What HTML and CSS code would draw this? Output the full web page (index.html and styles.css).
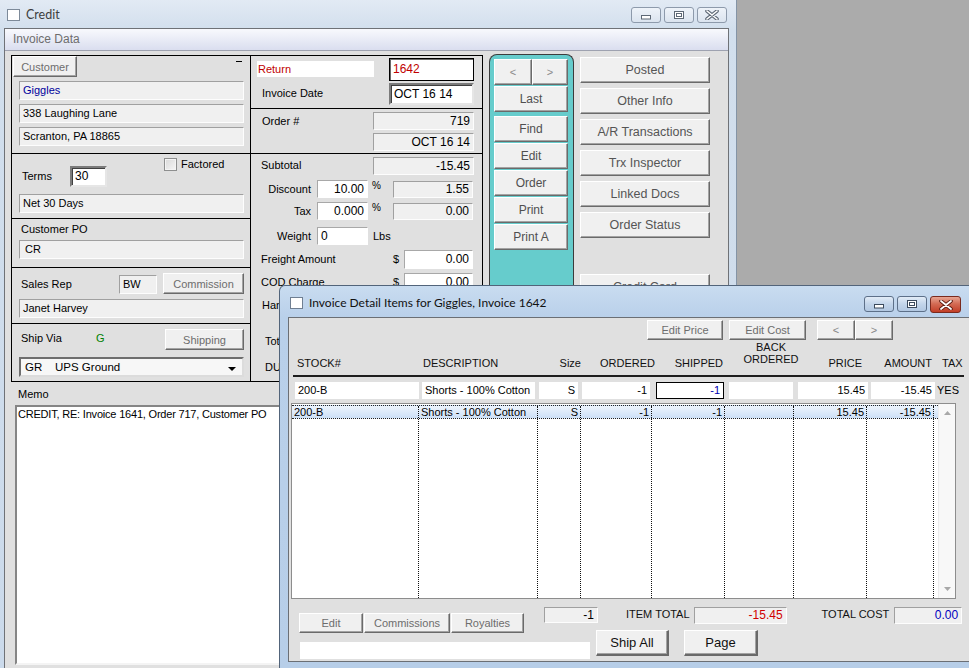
FILE: index.html
```html
<!DOCTYPE html>
<html>
<head>
<meta charset="utf-8">
<title>Credit</title>
<link rel="stylesheet" href="styles.css">
</head>
<body>
<div class="win win-main">
  <div class="tbar">
    <span class="ticon"></span>
    <span class="ttext">Credit</span>
    <div class="tbtns">
      <span class="tb tb-in"><svg width="10" height="5" viewBox="0 0 10 5"><rect x="0.5" y="0.5" width="9" height="3.5" fill="#fff" stroke="#5d6875"/></svg></span>
      <span class="tb tb-in"><svg width="10" height="8" viewBox="0 0 10 8"><rect x="0.5" y="0.5" width="9" height="7" fill="#fff" stroke="#5d6875"/><rect x="2.5" y="2.5" width="5" height="3" fill="none" stroke="#5d6875"/></svg></span>
      <span class="tb tb-in"><svg width="14" height="10" viewBox="0 0 14 10"><path d="M2 1 L12 9 M12 1 L2 9" stroke="#5d6875" stroke-width="3.6" stroke-linecap="round"/><path d="M2 1 L12 9 M12 1 L2 9" stroke="#fff" stroke-width="1.6" stroke-linecap="round"/></svg></span>
    </div>
  </div>
  <div class="main-client">
    <div class="phead">Invoice Data</div>
    <div class="form">
      <div class="toprow">
        <div class="lbox">
          <div class="sec s1">
            <div class="row">
              <span class="btn b-cust">Customer</span>
              <span class="dash"></span>
            </div>
            <div class="fld f225 h19 blue">Giggles</div>
            <div class="fld f225 h19">338 Laughing Lane</div>
            <div class="fld f225 h19">Scranton, PA 18865</div>
          </div>
          <div class="sec s2">
            <div class="row">
              <span class="lbl l-terms">Terms</span>
              <span class="inp i-terms">30</span>
              <span class="chk-wrap"><span class="chk"></span><span class="chk-lbl">Factored</span></span>
            </div>
            <div class="fld f225 h19 mt7">Net 30 Days</div>
          </div>
          <div class="sec s3">
            <div class="lbl l-po">Customer PO</div>
            <div class="fld f225 h19 pad5">CR</div>
          </div>
          <div class="sec s4">
            <div class="row">
              <span class="lbl l-rep">Sales Rep</span>
              <span class="fld h19 f-bw">BW</span>
              <span class="btn b-comm">Commission</span>
            </div>
            <div class="fld f225 h19 mt5">Janet Harvey</div>
          </div>
          <div class="sec s5">
            <div class="row">
              <span class="lbl l-ship">Ship Via</span>
              <span class="lbl l-g">G</span>
              <span class="btn b-ship">Shipping</span>
            </div>
            <div class="combo"><span>GR&nbsp;&nbsp;&nbsp;&nbsp;UPS Ground</span><svg width="8" height="4" viewBox="0 0 8 4"><path d="M0 0 H8 L4 4 Z" fill="#000"/></svg></div>
          </div>
        </div>

        <div class="mbox">
          <div class="msec m1">
            <div class="row">
              <span class="f-return">Return</span>
              <span class="i-num">1642</span>
            </div>
            <div class="row mt2">
              <span class="lbl l-idate">Invoice Date</span>
              <span class="inp i-date">OCT 16 14</span>
            </div>
          </div>
          <div class="msec m2">
            <div class="row">
              <span class="lbl l-order">Order #</span>
              <div class="ocol">
                <span class="fld h18 r f101">719</span>
                <span class="fld h18 r f101">OCT 16 14</span>
              </div>
            </div>
          </div>
          <div class="msec m3">
            <div class="row">
              <span class="lbl l-sub">Subtotal</span>
              <span class="fld h18 r f101 mt3">-15.45</span>
            </div>
            <div class="row mt5">
              <span class="lbl l-right">Discount</span>
              <span class="inp1 r i-pct">10.00</span>
              <span class="pct">%</span>
              <span class="fld h17 r f80 mt1">1.55</span>
            </div>
            <div class="row mt4">
              <span class="lbl l-right">Tax</span>
              <span class="inp1 r i-pct">0.000</span>
              <span class="pct">%</span>
              <span class="fld h17 r f80 mt1">0.00</span>
            </div>
            <div class="row mt7">
              <span class="lbl l-right">Weight</span>
              <span class="inp1 i-pct">0</span>
              <span class="lbs">Lbs</span>
            </div>
            <div class="row mt5">
              <span class="lbl l-money">Freight Amount</span>
              <span class="dollar">$</span>
              <span class="inp1 r i-money">0.00</span>
            </div>
            <div class="row mt4">
              <span class="lbl l-money">COD Charge</span>
              <span class="dollar">$</span>
              <span class="inp1 r i-money">0.00</span>
            </div>
            <div class="lbl l-extra">Handling</div>
            <div class="lbl l-tot">Total</div>
            <div class="lbl l-due">DUE</div>
          </div>
        </div>

        <div class="teal">
          <div class="row">
            <span class="btn tbtn t-prev">&lt;</span>
            <span class="btn tbtn t-next">&gt;</span>
          </div>
          <span class="btn tbtn t-full mt1">Last</span>
          <span class="btn tbtn t-full mt4">Find</span>
          <span class="btn tbtn t-full mt1">Edit</span>
          <span class="btn tbtn t-full mt1">Order</span>
          <span class="btn tbtn t-full mt1">Print</span>
          <span class="btn tbtn t-full mt1">Print A</span>
        </div>

        <div class="rbtns">
          <span class="btn rbtn">Posted</span>
          <span class="btn rbtn">Other Info</span>
          <span class="btn rbtn">A/R Transactions</span>
          <span class="btn rbtn">Trx Inspector</span>
          <span class="btn rbtn">Linked Docs</span>
          <span class="btn rbtn">Order Status</span>
          <span class="btn rbtn r-cc">Credit Card</span>
        </div>
      </div>
      <div class="lbl memo-lbl">Memo</div>
      <div class="memo">CREDIT, RE: Invoice 1641, Order 717, Customer PO</div>
    </div>
  </div>
</div>

<div class="win win-detail">
  <div class="tbar dtbar">
    <span class="ticon d-icon"></span>
    <span class="ttext">Invoice Detail Items for Giggles, Invoice 1642</span>
    <div class="tbtns d-btns">
      <span class="tb tb-act"><svg width="10" height="5" viewBox="0 0 10 5"><rect x="0.5" y="0.5" width="9" height="3.5" fill="#fff" stroke="#3b4a5c"/></svg></span>
      <span class="tb tb-act"><svg width="10" height="8" viewBox="0 0 10 8"><rect x="0.5" y="0.5" width="9" height="7" fill="#fff" stroke="#3b4a5c"/><rect x="2.5" y="2.5" width="5" height="3" fill="none" stroke="#3b4a5c"/></svg></span>
      <span class="tb tb-close"><svg width="14" height="10" viewBox="0 0 14 10"><path d="M2 1 L12 9 M12 1 L2 9" stroke="#5a1a10" stroke-width="3.6" stroke-linecap="round"/><path d="M2 1 L12 9 M12 1 L2 9" stroke="#fff" stroke-width="1.8" stroke-linecap="round"/></svg></span>
    </div>
  </div>
  <div class="dclient">
    <div class="dtool">
      <span class="btn d-ep">Edit Price</span>
      <span class="btn d-ec">Edit Cost</span>
      <span class="btn d-arr d-lt">&lt;</span>
      <span class="btn d-arr">&gt;</span>
    </div>
    <div class="dhead">
      <span class="h-stock">STOCK#</span>
      <span class="h-desc">DESCRIPTION</span>
      <span class="h-size">Size</span>
      <span class="h-ord">ORDERED</span>
      <span class="h-ship">SHIPPED</span>
      <span class="h-back">BACK<br>ORDERED</span>
      <span class="h-price">PRICE</span>
      <span class="h-amt">AMOUNT</span>
      <span class="h-tax">TAX</span>
    </div>
    <div class="entry">
      <span class="ef e-stock">200-B</span>
      <span class="ef e-desc">Shorts - 100% Cotton</span>
      <span class="ef r e-size">S</span>
      <span class="ef r e-ord">-1</span>
      <span class="ef r e-ship">-1</span>
      <span class="ef e-back"></span>
      <span class="ef r e-price">15.45</span>
      <span class="ef r e-amt">-15.45</span>
      <span class="e-tax">YES</span>
    </div>
    <div class="grid">
      <div class="gbody">
        <div class="grow sel">
          <span class="gc c1">200-B</span>
          <span class="gc c2">Shorts - 100% Cotton</span>
          <span class="gc c3 r">S</span>
          <span class="gc c4 r">-1</span>
          <span class="gc c5 r">-1</span>
          <span class="gc c6"></span>
          <span class="gc c7 r">15.45</span>
          <span class="gc c8 r">-15.45</span>
          <span class="gc c9"></span>
        </div>
        <div class="grow fill">
          <span class="gc c1"></span>
          <span class="gc c2"></span>
          <span class="gc c3"></span>
          <span class="gc c4"></span>
          <span class="gc c5"></span>
          <span class="gc c6"></span>
          <span class="gc c7"></span>
          <span class="gc c8"></span>
          <span class="gc c9"></span>
        </div>
      </div>
      <div class="sbar">
        <svg width="7" height="4" viewBox="0 0 7 4"><path d="M0 4 L3.5 0 L7 4 Z" fill="#a8a8a8"/></svg>
        <svg width="7" height="4" viewBox="0 0 7 4"><path d="M0 0 L3.5 4 L7 0 Z" fill="#a8a8a8"/></svg>
      </div>
    </div>
    <div class="dfoot">
      <div class="fcol-l">
        <div class="row">
          <div class="fbtns">
            <span class="btn fb-edit">Edit</span>
            <span class="btn fb-comm">Commissions</span>
            <span class="btn fb-roy">Royalties</span>
          </div>
          <span class="fld r f-cnt">-1</span>
        </div>
        <div class="f-white"></div>
      </div>
      <div class="fcol-r">
        <div class="row">
          <span class="tot-lbl it-lbl">ITEM TOTAL</span>
          <span class="fld r f-it red">-15.45</span>
          <span class="tot-lbl tc-lbl">TOTAL COST</span>
          <span class="fld r f-tc navy">0.00</span>
        </div>
        <div class="row mt6">
          <span class="btn bigbtn b-shipall">Ship All</span>
          <span class="btn bigbtn b-page">Page</span>
        </div>
      </div>
    </div>
  </div>
</div>
</body>
</html>
```

FILE: styles.css
```css
* { box-sizing: border-box; }
html, body { margin: 0; padding: 0; }
body {
  width: 969px;
  height: 668px;
  overflow: hidden;
  position: relative;
  background: #ababab;
  font-family: "Liberation Sans", Arial, sans-serif;
  font-size: 11px;
  color: #000;
}
.row { display: flex; align-items: flex-start; }
.row > * { flex: none; }
.r { text-align: right; }
.mt1 { margin-top: 1px; }
.mt2 { margin-top: 2px; }
.mt3 { margin-top: 3px; }
.mt4 { margin-top: 4px; }
.mt5 { margin-top: 5px !important; }
.mt6 { margin-top: 6px; }
.mt7 { margin-top: 7px !important; }
.blue { color: #00009c; }
.red { color: #d00000; }
.navy { color: #0000c0; }

/* ---------- windows ---------- */
.win { position: absolute; }
.win-main {
  left: 0; top: 0;
  width: 737px; height: 668px;
  padding: 0 7px 0 4px;
  background: linear-gradient(#e2eaf4, #d2dfed 30px, #cbdaeb);
  border-right: 1px solid #8494a6;
}
.tbar { display: flex; align-items: flex-start; height: 28px; }
.ticon {
  width: 13px; height: 12px;
  margin: 9px 0 0 3px;
  background: #fff;
  border: 1px solid #7d8a99;
  flex: none;
}
.ttext {
  font-family: Lato, "Noto Sans", sans-serif;
  font-size: 12.5px;
  line-height: 16px;
  margin: 7px 0 0 6px;
  color: #3e3e3e;
  white-space: nowrap;
}
.tbtns { margin-left: auto; margin-right: 2px; margin-top: 7px; display: flex; gap: 3px; }
.tb {
  width: 30px; height: 16px;
  border-radius: 3px;
  display: flex; align-items: center; justify-content: center;
}
.tb-in {
  border: 1px solid #8d9aab;
  background: linear-gradient(#eef3f9, #dbe4ef);
}
.tb-in:first-child svg { margin-top: 5px; }
.main-client {
  height: 640px;
  border: 1px solid #6f7277;
  border-bottom: none;
  background: #e0e0e0;
}
.phead {
  height: 22px;
  padding-left: 8px;
  line-height: 21px;
  font-size: 12px;
  color: #6d6d6d;
  border-bottom: 1px solid #9ea2b0;
  background: linear-gradient(#f8f9fd, #dadeef);
}
.form { padding: 4px 0 0 6px; }
.toprow { display: flex; align-items: flex-start; height: 327px; }

/* ---------- generic controls ---------- */
.lbl { line-height: 14px; white-space: nowrap; }
.fld {
  display: block;
  background: #f0f0f0;
  border: 1px solid;
  border-color: #a0a0a0 #fdfdfd #fdfdfd #a0a0a0;
  padding: 0 3px;
  white-space: nowrap;
  overflow: hidden;
}
.h19 { height: 19px; line-height: 17px; }
.h18 { height: 18px; line-height: 16px; }
.h17 { height: 17px; line-height: 15px; }
.inp {
  display: block;
  background: #fff;
  border: 2px solid;
  border-color: #7b7b7b #e6e6e6 #e6e6e6 #7b7b7b;
  box-shadow: inset 1px 1px 0 #404040;
  padding: 0 3px;
  white-space: nowrap;
}
.inp1 {
  display: block;
  background: #fff;
  border: 1px solid;
  border-color: #a8a8a8 #fff #fff #a8a8a8;
  padding: 0 3px;
  height: 18px;
  line-height: 16px;
}
.btn {
  display: flex; align-items: center; justify-content: center;
  background: #f0f0f0;
  border: 1px solid;
  border-color: #fff #6a6a6a #6a6a6a #fff;
  box-shadow: inset -1px -1px 0 #a3a3a3;
  color: #6d6d6d;
  font-size: 11px;
  white-space: nowrap;
}

/* ---------- left box ---------- */
.lbox { width: 240px; height: 327px; border: 1px solid #000; flex: none; }
.sec { border-bottom: 1px solid #000; }
.s1 { height: 98px; }
.s2 { height: 65px; }
.s3 { height: 46px; }
.s4 { height: 56px; }
.s5 { height: 59px; border-bottom: none; }
.f225 { width: 225px; margin-left: 7px; margin-top: 4px; }
.b-cust { width: 64px; height: 21px; margin-left: 1px; }
.dash { width: 6px; height: 1px; background: #000; margin: 5px 8px 0 auto; }
.l-terms { width: 48px; margin: 15px 0 0 10px; }
.i-terms { width: 37px; height: 21px; line-height: 17px; margin-top: 12px; font-size: 12px; }
.chk-wrap { display: flex; align-items: center; margin: 4px 0 0 57px; }
.chk {
  width: 13px; height: 13px;
  border: 1px solid #8e8f8f;
  background: linear-gradient(135deg, #d9d9d9, #f6f6f6);
  box-shadow: inset 0 0 0 1px #f4f4f4;
}
.chk-lbl { margin-left: 4px; line-height: 13px; font-size: 11px; }
.l-po { margin: 3px 0 0 9px; }
.pad5 { padding-left: 5px; }
.l-rep { width: 98px; margin: 9px 0 0 9px; }
.f-bw { width: 38px; margin-top: 7px; }
.b-comm { width: 81px; height: 21px; margin: 5px 0 0 6px; }
.l-ship { width: 75px; margin: 7px 0 0 9px; }
.l-g { width: 69px; margin-top: 7px; color: #008000; }
.b-ship { width: 79px; height: 21px; margin-top: 5px; }
.combo {
  width: 225px; height: 20px;
  margin: 7px 0 0 7px;
  display: flex; align-items: center; justify-content: space-between;
  padding: 0 6px 0 4px;
  background: #f7f7f7;
  border: 2px solid;
  border-color: #6e6e6e #dcdcdc #dcdcdc #6e6e6e;
  font-size: 11.5px;
}
.combo svg { margin-top: 3px; }

/* ---------- middle box ---------- */
.mbox { width: 233px; height: 327px; border: 1px solid #000; margin-left: -1px; flex: none; }
.msec { border-bottom: 1px solid #000; }
.m1 { height: 53px; }
.m2 { height: 45px; }
.m3 { border-bottom: none; }
.f-return {
  width: 117px; height: 16px;
  margin: 5px 0 0 6px;
  background: #fff;
  color: #c00000;
  line-height: 16px;
  padding-left: 1px;
}
.i-num {
  width: 85px; height: 23px;
  margin: 2px 0 0 15px;
  background: #fff;
  border: 1px solid #000;
  box-shadow: inset 1px 1px 0 #6a6a6a;
  color: #c00000;
  font-size: 12px;
  line-height: 21px;
  padding-left: 3px;
}
.l-idate { width: 127px; margin: 3px 0 0 11px; }
.i-date { width: 85px; height: 22px; line-height: 18px; font-size: 12px; }
.l-order { width: 111px; margin: 5px 0 0 11px; }
.ocol { display: flex; flex-direction: column; gap: 3px; margin-top: 3px; }
.f101 { width: 101px; font-size: 12px; }
.f80 { width: 80px; font-size: 12px; }
.l-sub { width: 112px; margin: 4px 0 0 10px; }
.l-right { width: 61px; text-align: right; padding-right: 1px; line-height: 18px; }
.i-pct { width: 51px; margin-left: 5px; font-size: 12px; }
.pct { width: 25px; padding-left: 4px; line-height: 12px; font-size: 10px; }
.lbs { margin-left: 5px; line-height: 18px; }
.l-money { width: 132px; margin-left: 10px; line-height: 19px; }
.dollar { width: 11px; line-height: 19px; }
.i-money { width: 69px; height: 19px; line-height: 17px; font-size: 12px; }
.l-extra { margin: 6px 0 0 11px; }
.l-tot { margin: 22px 0 0 14px; }
.l-due { margin: 12px 0 0 14px; }

/* ---------- teal nav ---------- */
.teal {
  width: 85px; height: 320px;
  margin: -1px 0 0 6px;
  padding: 4px 0 0 4px;
  background: #66cccc;
  border: 1px solid #3c3c3c;
  border-bottom: none;
  border-radius: 8px 8px 0 0;
  flex: none;
}
.tbtn { height: 26px; font-size: 12px; color: #4f4f4f; }
.t-prev { width: 38px; color: #8a8a8a; font-size: 11px; }
.t-next { width: 36px; color: #8a8a8a; font-size: 11px; }
.t-full { width: 74px; }

/* ---------- right buttons ---------- */
.rbtns { width: 130px; margin: 2px 0 0 6px; display: flex; flex-direction: column; gap: 5px; flex: none; }
.rbtn { height: 26px; font-size: 12.5px; color: #555; }
.r-cc { margin-top: 31px; }

/* ---------- memo ---------- */
.memo-lbl { margin: 5px 0 0 7px; }
.memo {
  width: 713px; height: 260px;
  margin: 4px 0 0 4px;
  background: #fff;
  border: 2px solid;
  border-color: #858585 #f4f4f4 #f4f4f4 #858585;
  line-height: 14px;
  padding: 0 1px;
  letter-spacing: -0.2px;
}

/* ---------- detail window ---------- */
.win-detail {
  left: 279px; top: 285px;
  width: 700px; height: 383px;
  padding: 0 0 6px 8px;
  border: 1px solid #52647a;
  border-bottom: none;
  border-radius: 6px 6px 0 0;
  background: linear-gradient(#c9dcf0, #b9d0ea 31px, #b7cee8);
}
.dtbar { height: 31px; }
.d-icon { margin: 11px 0 0 2px; border-color: #6f7f92; }
.dtbar .ttext { margin-top: 9px; color: #111; font-size: 12px; }
.d-btns { margin-right: 17px; margin-top: 10px; }
.tb-act {
  height: 16px;
  border: 1px solid #5d7089;
  background: linear-gradient(#e2ecf7, #c3d5ea 50%, #b2c8e2);
}
.tb-act:first-child svg { margin-top: 5px; }
.tb-close {
  width: 31px; height: 17px;
  border: 1px solid #7a2a1e;
  background: linear-gradient(#e8a593, #d36c55 45%, #c23e27);
}
.dclient {
  height: 345px;
  border: 1px solid #6b6f75;
  background: #e0e0e0;
}
.dtool { display: flex; margin-top: 2px; }
.dtool .btn { height: 20px; }
.d-ep { width: 76px; margin-left: 358px; }
.d-ec { width: 77px; margin-left: 6px; }
.d-arr { width: 38px; color: #888; }
.d-lt { margin-left: 11px; }
.dhead {
  display: flex; align-items: flex-end;
  width: 671px; height: 37px;
  margin-left: 4px;
  padding-bottom: 5px;
  border-bottom: 2px solid #1e1e1e;
  font-size: 11px;
  line-height: 14px;
  color: #111;
  white-space: nowrap;
}
.dhead > * { flex: none; }
.h-stock { width: 130px; padding-left: 4px; }
.h-desc { width: 118px; }
.h-size { width: 40px; text-align: right; }
.h-ord { width: 74px; text-align: right; }
.h-ship { width: 68px; text-align: right; }
.h-back { width: 96px; text-align: center; align-self: flex-start; line-height: 12px; margin-top: 1px; }
.h-price { width: 43px; text-align: right; }
.h-amt { width: 70px; text-align: right; }
.h-tax { margin-left: 10px; }
.entry { display: flex; margin-top: 5px; height: 17px; }
.entry > * { flex: none; }
.ef {
  display: block; height: 17px;
  background: #fff;
  line-height: 17px;
  padding: 0 3px;
  white-space: nowrap;
  overflow: hidden;
  font-size: 11px;
}
.e-stock { width: 124px; margin-left: 6px; }
.e-desc { width: 113px; margin-left: 3px; }
.e-size { width: 39px; margin-left: 4px; }
.e-ord { width: 68px; margin-left: 4px; }
.e-ship { width: 68px; margin-left: 6px; border: 1px solid #000; line-height: 15px; color: #0000b0; }
.e-back { width: 64px; margin-left: 5px; }
.e-price { width: 70px; margin-left: 5px; }
.e-amt { width: 64px; margin-left: 3px; }
.e-tax { margin-left: 2px; line-height: 17px; font-size: 11px; }
.grid {
  display: flex;
  width: 665px; height: 196px;
  margin: 4px 0 0 2px;
  background: #fff;
  border: 1px solid #8d8d8d;
}
.gbody { flex: 1; display: flex; flex-direction: column; padding-top: 1px; }
.grow { display: flex; }
.grow.sel {
  height: 14px;
  border-top: 1px dotted #222;
  border-bottom: 1px dotted #222;
  background: linear-gradient(#edf4fd, #cde0f7);
}
.grow.fill { flex: 1; }
.gc {
  display: block;
  border-right: 1px dotted #111;
  line-height: 12px;
  padding: 0 2px;
  white-space: nowrap;
  overflow: hidden;
  font-size: 11px;
  flex: none;
}
.c1 { width: 127px; }
.c2 { width: 119px; }
.c3 { width: 43px; }
.c4 { width: 71px; }
.c5 { width: 73px; }
.c6 { width: 69px; }
.c7 { width: 73px; }
.c8 { width: 67px; }
.c9 { flex: 1; border-right: none; }
.sbar {
  width: 17px;
  background: #f8f8f8;
  border-left: 1px solid #ececec;
  display: flex; flex-direction: column; justify-content: space-between; align-items: center;
  padding: 7px 0 7px;
}
.dfoot { display: flex; }
.fcol-l { width: 309px; padding-top: 8px; flex: none; }
.fbtns { display: flex; gap: 1px; margin: 6px 0 0 10px; }
.fbtns .btn { height: 20px; }
.fb-edit { width: 64px; }
.fb-comm { width: 86px; }
.fb-roy { width: 73px; }
.f-cnt { width: 54px; height: 16px; line-height: 14px; margin-left: 20px; font-size: 12px; }
.f-white { width: 290px; height: 17px; margin: 9px 0 0 11px; background: #fff; }
.fcol-r { padding-top: 8px; flex: none; width: 365px; }
.tot-lbl { line-height: 15px; font-size: 11px; color: #111; white-space: nowrap; }
.it-lbl { margin-left: 28px; }
.f-it { width: 93px; height: 17px; line-height: 15px; margin-left: 4px; font-size: 12px; }
.tc-lbl { margin-left: 35px; }
.f-tc { width: 68px; height: 17px; line-height: 15px; margin-left: 5px; font-size: 12px; }
.bigbtn { height: 26px; font-size: 13px; color: #111; border-right-width: 2px; border-bottom-width: 2px; }
.b-shipall { width: 73px; margin-left: -2px; }
.b-page { width: 74px; margin-left: 15px; }
```
